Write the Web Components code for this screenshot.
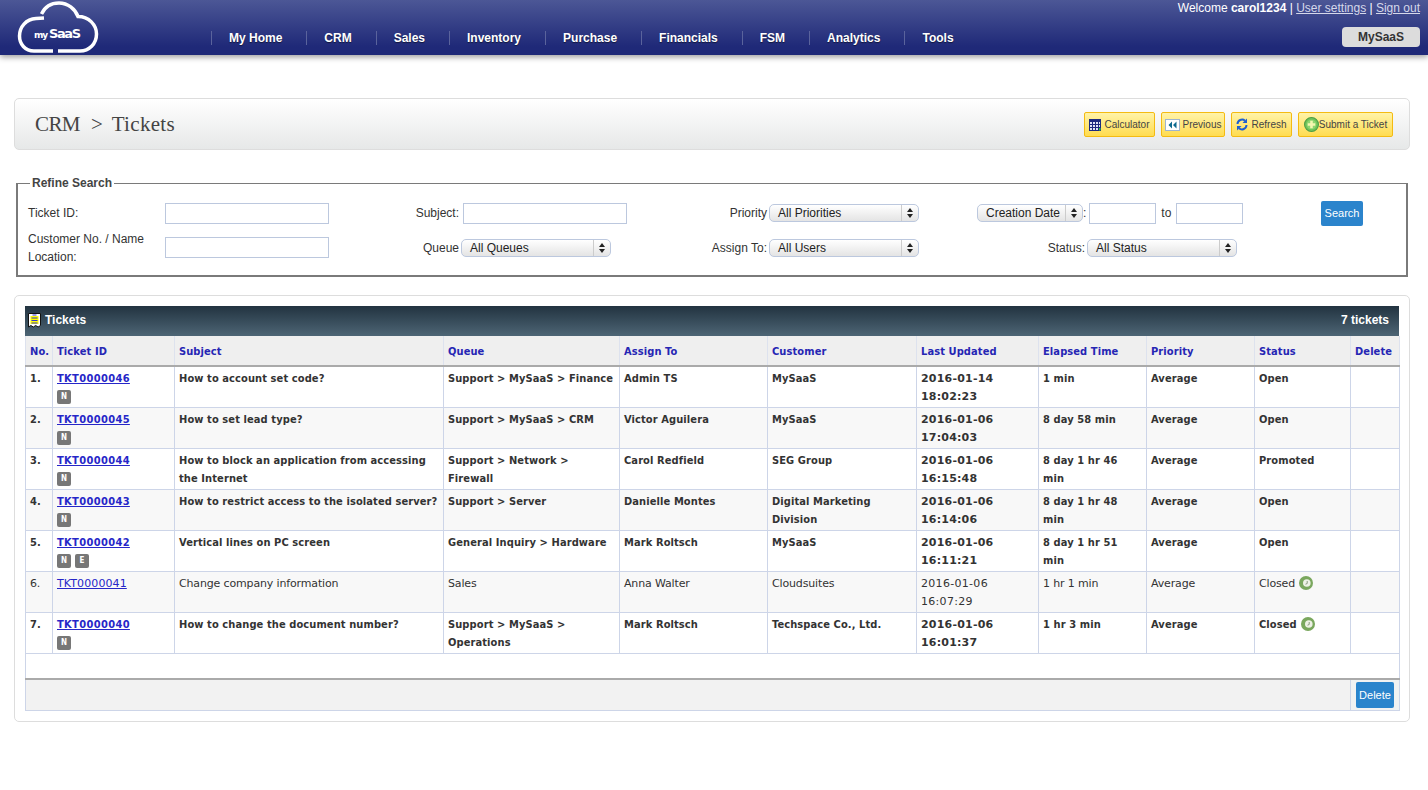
<!DOCTYPE html>
<html>
<head>
<meta charset="utf-8">
<title>Tickets</title>
<style>
body { margin: 0; background: #fff; font-family: "Liberation Sans", Arial, sans-serif; font-size: 12px; color: #333; }
</style>
</head>
<body>
<app-header></app-header>
<page-title>
	<tool-button icon="calc" style="width:71px">Calculator</tool-button>
	<tool-button icon="prev" style="width:64px">Previous</tool-button>
	<tool-button icon="refresh" style="width:61px">Refresh</tool-button>
	<tool-button icon="add" style="width:95px">Submit a Ticket</tool-button>
</page-title>
<refine-search></refine-search>
<ticket-table></ticket-table>

<script>
class AppHeader extends HTMLElement {
	constructor() {
		super();
		this.attachShadow({ mode: 'open' });
	}

	connectedCallback() {
		const menu = ['My Home', 'CRM', 'Sales', 'Inventory', 'Purchase', 'Financials', 'FSM', 'Analytics', 'Tools'];
		this.shadowRoot.innerHTML = `
		<style>
		:host {
			display: flex;
			height: 55px;
			background: linear-gradient(#4c5796, #1f2978 85%);
			box-shadow: 0 2px 6px rgba(0, 0, 0, .4);
			color: #fff;
			position: relative;
		}
		.logo { width: 211px; flex: none; }
		.logo svg { display: block; }
		nav { display: flex; flex: 1; align-items: flex-start; padding-top: 31px; }
		nav a {
			font-weight: bold;
			font-size: 12px;
			line-height: 14px;
			padding: 0 24px 0 17px;
			border-left: 1px solid #5a639c;
			text-shadow: 0 1px 1px rgba(0, 0, 0, .5);
		}
		.right { width: 300px; padding-right: 8px; box-sizing: border-box; text-align: right; flex: none; }
		.welcome { font-size: 12px; line-height: 14px; padding-top: 1px; }
		.welcome a { color: #d5d8ea; text-decoration: underline; }
		.account {
			display: inline-block;
			margin-top: 12px;
			width: 78px;
			height: 20px;
			line-height: 20px;
			background: #dcdcdc;
			border-radius: 4px;
			color: #333;
			font-weight: bold;
			text-align: center;
		}
		</style>
		<div class="logo">
			<svg width="120" height="55" viewBox="0 0 120 55">
				<path d="M53 51H34C25 51 19.500 44 19.500 36C19.500 27 26 19 36 18.500L44 18" fill="none" stroke="#fff" stroke-width="3.500"/>
				<path d="M41.500 14C45 6.500 52 3 59 3C68 3 75 9 78 16.500C89 16.500 96.500 25 96.500 34C96.500 44 89 51 80 51H58" fill="none" stroke="#fff" stroke-width="3.500"/>
				<text x="34" y="38" font-family="DejaVu Sans" font-size="9" font-weight="bold" fill="#fff" textLength="14">my</text>
				<text x="49" y="38" font-family="DejaVu Sans" font-size="13" font-weight="bold" fill="#fff" textLength="32">SaaS</text>
			</svg>
		</div>
		<nav>${menu.map(m => `<a>${m}</a>`).join('')}</nav>
		<div class="right">
			<div class="welcome">Welcome <b>carol1234</b> | <a>User settings</a> | <a>Sign out</a></div>
			<div class="account">MySaaS</div>
		</div>`;
	}
}

const ICONS = {
	calc: `<svg width="12" height="12" viewBox="0 0 12 12"><rect width="12" height="12" fill="#1c2a80"/><path d="M1 3h2v2H1zM4 3h2v2H4zM7 3h2v2H7zM10 3h1v2h-1zM1 6h2v2H1zM4 6h2v2H4zM7 6h2v2H7zM10 6h1v2h-1zM1 9h2v2H1zM4 9h2v2H4zM7 9h2v2H7z" fill="#dfe4f5"/><rect x="10" y="9" width="1.500" height="2.500" fill="#2ecc40"/></svg>`,
	prev: `<svg width="15" height="12" viewBox="0 0 15 12"><rect x=".5" y=".5" width="14" height="11" fill="#fff" stroke="#9fb4cf"/><path d="M7 2.500L3.500 6 7 9.500zM11.500 2.500L8 6l3.500 3.500z" fill="#0d6a8f"/></svg>`,
	refresh: `<svg width="12" height="13" viewBox="0 0 12 13"><path d="M1.500 6A4.500 4.500 0 0 1 9 2.800" fill="none" stroke="#1d5fd0" stroke-width="2"/><path d="M11 .5V5H6.500z" fill="#1d5fd0"/><path d="M10.500 7A4.500 4.500 0 0 1 3 10.200" fill="none" stroke="#1d5fd0" stroke-width="2"/><path d="M1 12.500V8h4.500z" fill="#1d5fd0"/></svg>`,
	add: `<svg width="15" height="15" viewBox="0 0 14 14"><circle cx="7" cy="7" r="6.500" fill="#6fc35a" stroke="#4e9e44"/><circle cx="7" cy="7" r="4.500" fill="#8ed66f"/><path d="M5.800 3.500h2.400v2.300h2.300v2.400H8.200v2.300H5.800V8.200H3.500V5.800h2.300z" fill="#f4f7b0"/></svg>`
};

class ToolButton extends HTMLElement {
	constructor() {
		super();
		this.attachShadow({ mode: 'open' });
	}

	connectedCallback() {
		this.shadowRoot.innerHTML = `
		<style>
		:host {
			display: flex;
			align-items: center;
			justify-content: center;
			gap: 3px;
			box-sizing: border-box;
			height: 25px;
			background: linear-gradient(#fff3a8, #ffdc50);
			border: 1px solid #f4bb12;
			border-radius: 2px;
			font-size: 10px;
			color: #444;
			white-space: nowrap;
		}
		:host([icon="add"]) { gap: 0; }
		svg { display: block; flex: none; }
		</style>
		${ICONS[this.getAttribute('icon')]}<slot></slot>`;
	}
}

class PageTitle extends HTMLElement {
	constructor() {
		super();
		this.attachShadow({ mode: 'open' });
	}

	connectedCallback() {
		this.shadowRoot.innerHTML = `
		<style>
		:host {
			display: flex;
			align-items: center;
			box-sizing: border-box;
			height: 52px;
			margin: 43px 18px 0 14px;
			padding: 0 16px 0 20px;
			border: 1px solid #ddd;
			border-radius: 5px;
			background: linear-gradient(#fff, #e6e8e8);
		}
		h1 {
			flex: 1;
			margin: 0;
			font: normal 21px "Liberation Serif", "Times New Roman", serif;
			color: #444;
			display: flex;
			gap: 11px;
		}
		h1 .a { letter-spacing: -.6px; }
		h1 .b { letter-spacing: .3px; margin-left: -2px; }
		.tools { display: flex; gap: 6px; margin-top: 1px; }
		</style>
		<h1><span class="a">CRM</span><span>&gt;</span><span class="b">Tickets</span></h1>
		<div class="tools"><slot></slot></div>`;
	}
}

class FakeSelect extends HTMLElement {
	constructor() {
		super();
		this.attachShadow({ mode: 'open' });
	}

	connectedCallback() {
		this.shadowRoot.innerHTML = `
		<style>
		:host {
			display: inline-flex;
			flex: none;
			box-sizing: border-box;
			height: 18px;
			align-items: center;
			border: 1px solid #bcc8de;
			border-radius: 5px;
			background: linear-gradient(#fff, #e4e4e4);
			font-size: 12px;
			color: #222;
			padding-left: 8px;
		}
		.txt { flex: 1; white-space: nowrap; }
		.arr { width: 16px; height: 100%; border-left: 1px solid #ccc; display: flex; align-items: center; justify-content: center; }
		</style>
		<span class="txt"><slot></slot></span>
		<span class="arr"><svg width="6" height="10" viewBox="0 0 6 10"><path d="M3 0L6 4H0zM3 10L0 6h6z" fill="#222"/></svg></span>`;
	}
}

class RefineSearch extends HTMLElement {
	constructor() {
		super();
		this.attachShadow({ mode: 'open' });
	}

	connectedCallback() {
		this.shadowRoot.innerHTML = `
		<style>
		:host { display: block; margin: 26px 20px 0 16px; }
		fieldset {
			margin: 0;
			height: 101px;
			box-sizing: border-box;
			padding: 10px 0 0 10px;
			border: 2px solid #7a7a7a;
			border-width: 1.500px 2px 2px 2px;
		}
		legend { font-weight: bold; padding: 0 2px; margin-left: 2px; color: #444; line-height: 14px; }
		.grid {
			display: grid;
			grid-template-columns: 137px 164px 132px 176px 132px 150px 58px 260px 84px 42px;
			grid-template-rows: 26px 37px;
			row-gap: 3px;
			align-items: center;
			color: #333;
			line-height: 18px;
		}
		.r { text-align: right; padding-right: 2px; }
		input {
			display: block;
			box-sizing: border-box;
			height: 21px;
			padding: 0;
			border: 1px solid #bcc8de;
			background: #fff;
		}
		.wide { width: 164px; }
		.date { width: 67px; flex: none; }
		.to { margin: 0 5px; }
		.dates { display: flex; align-items: center; }
		.status { display: flex; justify-content: flex-end; align-items: center; gap: 2px; }
		.btn {
			width: 42px;
			height: 25px;
			line-height: 25px;
			background: #2b84cc;
			color: #fff;
			text-align: center;
			border-radius: 2px;
			font-size: 11px;
		}
		.pull { margin-left: 2px; }
		</style>
		<fieldset>
			<legend>Refine Search</legend>
			<div class="grid">
				<div>Ticket ID:</div>
				<input class="wide">
				<div class="r">Subject:</div>
				<div class="pull"><input class="wide"></div>
				<div class="r">Priority</div>
				<fake-select style="width:150px">All Priorities</fake-select>
				<div></div>
				<div class="dates">
					<fake-select style="width:106px">Creation Date</fake-select>:<input class="date" style="margin-left:3px"><span class="to">to</span><input class="date">
				</div>
				<div></div>
				<div class="btn">Search</div>

				<div>Customer No. / Name<br>Location:</div>
				<input class="wide">
				<div class="r">Queue</div>
				<fake-select style="width:150px">All Queues</fake-select>
				<div class="r">Assign To:</div>
				<fake-select style="width:150px">All Users</fake-select>
				<div></div>
				<div class="status">Status: <fake-select style="width:150px">All Status</fake-select></div>
			</div>
		</fieldset>`;
	}
}

const TICKETS = [
	['TKT0000046', 'N', 'How to account set code?', 'Support &gt; MySaaS &gt; Finance', 'Admin TS', 'MySaaS', '2016-01-14 18:02:23', '1 min', 'Open'],
	['TKT0000045', 'N', 'How to set lead type?', 'Support &gt; MySaaS &gt; CRM', 'Victor Aguilera', 'MySaaS', '2016-01-06 17:04:03', '8 day 58 min', 'Open'],
	['TKT0000044', 'N', 'How to block an application from accessing the Internet', 'Support &gt; Network &gt; Firewall', 'Carol Redfield', 'SEG Group', '2016-01-06 16:15:48', '8 day 1 hr 46 min', 'Promoted'],
	['TKT0000043', 'N', 'How to restrict access to the isolated server?', 'Support &gt; Server', 'Danielle Montes', 'Digital Marketing Division', '2016-01-06 16:14:06', '8 day 1 hr 48 min', 'Open'],
	['TKT0000042', 'NE', 'Vertical lines on PC screen', 'General Inquiry &gt; Hardware', 'Mark Roltsch', 'MySaaS', '2016-01-06 16:11:21', '8 day 1 hr 51 min', 'Open'],
	['TKT0000041', '', 'Change company information', 'Sales', 'Anna Walter', 'Cloudsuites', '2016-01-06 16:07:29', '1 hr 1 min', 'Closed'],
	['TKT0000040', 'N', 'How to change the document number?', 'Support &gt; MySaaS &gt; Operations', 'Mark Roltsch', 'Techspace Co., Ltd.', '2016-01-06 16:01:37', '1 hr 3 min', 'Closed']
];

const CLOCK = `<svg class="clock" width="14" height="14" viewBox="0 0 14 14"><circle cx="7" cy="7" r="7" fill="#7aa75e"/><circle cx="7.800" cy="7" r="3.800" fill="#eef1e6"/><path d="M8.200 5V7.500L6.500 8.200" fill="none" stroke="#8a9a80"/></svg>`;

class TicketTable extends HTMLElement {
	constructor() {
		super();
		this.attachShadow({ mode: 'open' });
	}

	connectedCallback() {
		const widths = [27, 122, 269, 176, 148, 149, 122, 108, 108, 96, 49];
		const heads = ['No.', 'Ticket ID', 'Subject', 'Queue', 'Assign To', 'Customer', 'Last Updated', 'Elapsed Time', 'Priority', 'Status', 'Delete'];
		const rows = TICKETS.map((t, i) => `
			<tr class="${t[1] ? 'unread' : ''}">
				<td>${i + 1}.</td>
				<td><a>${t[0]}</a>${t[1] ? `<div class="tags">${t[1].split('').map(x => `<span>${x}</span>`).join('')}</div>` : ''}</td>
				<td>${t[2]}</td>
				<td>${t[3]}</td>
				<td>${t[4]}</td>
				<td>${t[5]}</td>
				<td class="date">${t[6]}</td>
				<td class="elapsed">${t[7]}</td>
				<td>Average</td>
				<td>${t[8]}${t[8] === 'Closed' ? ' ' + CLOCK : ''}</td>
				<td></td>
			</tr>`).join('');

		this.shadowRoot.innerHTML = `
		<style>
		:host {
			display: block;
			box-sizing: border-box;
			margin: 18px 18px 0 14px;
			height: 427px;
			padding: 10px 10px 0 10px;
			border: 1px solid #ddd;
			border-radius: 5px;
		}
		.bar {
			display: flex;
			align-items: center;
			box-sizing: border-box;
			height: 30px;
			padding: 0 10px 2px 2px;
			background: linear-gradient(#223340, #4d6575);
			color: #fff;
			font-weight: bold;
		}
		.bar svg { margin-right: 3px; flex: none; }
		.bar b { flex: 1; }
		table {
			width: 1374px;
			table-layout: fixed;
			border-collapse: collapse;
			font: 11px/18px "DejaVu Sans", Verdana, sans-serif;
			letter-spacing: -.15px;
			color: #333;
		}
		th, tr.unread td {
			font-family: "DejaVu Sans Condensed", "DejaVu Sans", Verdana, sans-serif;
			font-weight: bold;
			letter-spacing: .1px;
		}
		th {
			height: 30px;
			box-sizing: border-box;
			background: #efefef;
			color: #2626b4;
			text-align: left;
			padding: 2px 4px 0;
			border: 1px solid #dde2ee;
			border-top: 0;
			border-bottom: 2px solid #aaa;
		}
		td {
			height: 41px;
			box-sizing: border-box;
			vertical-align: top;
			padding: 3px 4px 0;
			border: 1px solid #cdd5e8;
		}
		tbody tr:nth-child(even) td { background: #f8f8f8; }
		a { color: #2626c8; text-decoration: underline; letter-spacing: .1px; }
		tr.unread a { letter-spacing: .35px; }
		td.date { letter-spacing: .3px; }
		tr.unread td.date { font-family: "DejaVu Sans", Verdana, sans-serif; letter-spacing: .2px; }
		td.elapsed { padding-right: 14px; }
		.tags { display: flex; gap: 4px; margin-top: 2px; }
		.tags span {
			width: 14px;
			height: 14px;
			line-height: 14px;
			background: #777;
			color: #fff;
			border-radius: 2px;
			font-size: 8px;
			text-align: center;
		}
		.clock { vertical-align: -3px; margin-left: 1px; }
		tr.gap td { height: 26px; padding: 0; background: #fff !important; border-bottom: 2px solid #aaa; }
		tr.foot td { height: 31px; padding: 0; background: #f2f2f2; }
		.del {
			width: 38px;
			height: 26px;
			margin: 2px 0 0 5px;
			background: #2b84cc;
			color: #fff;
			text-align: center;
			border-radius: 2px;
			letter-spacing: 0;
			font: 11px/26px "Liberation Sans", Arial, sans-serif;
		}
		</style>
		<div class="bar">
			<svg width="15" height="16" viewBox="0 0 15 16"><path d="M1.500 1.500h12v12l-2.400 1.500-2.400-1.500-2.400 1.500-2.400-1.500-2.400 1.500z" fill="#fff" stroke="#111"/><rect x="3.500" y="4" width="8" height="8" fill="#ff0"/><path d="M5.500 3h4M4.500 6h6M4.500 8.500h6M4.500 11h6" stroke="#33c" fill="none"/></svg>
			<b>Tickets</b><span>7 tickets</span>
		</div>
		<table>
			<colgroup>${widths.map(w => `<col style="width:${w}px">`).join('')}</colgroup>
			<thead><tr>${heads.map(h => `<th>${h}</th>`).join('')}</tr></thead>
			<tbody>
				${rows}
				<tr class="gap"><td colspan="11"></td></tr>
				<tr class="foot"><td colspan="10"></td><td><div class="del">Delete</div></td></tr>
			</tbody>
		</table>`;
	}
}

customElements.define('app-header', AppHeader);
customElements.define('tool-button', ToolButton);
customElements.define('page-title', PageTitle);
customElements.define('fake-select', FakeSelect);
customElements.define('refine-search', RefineSearch);
customElements.define('ticket-table', TicketTable);
</script>
</body>
</html>
